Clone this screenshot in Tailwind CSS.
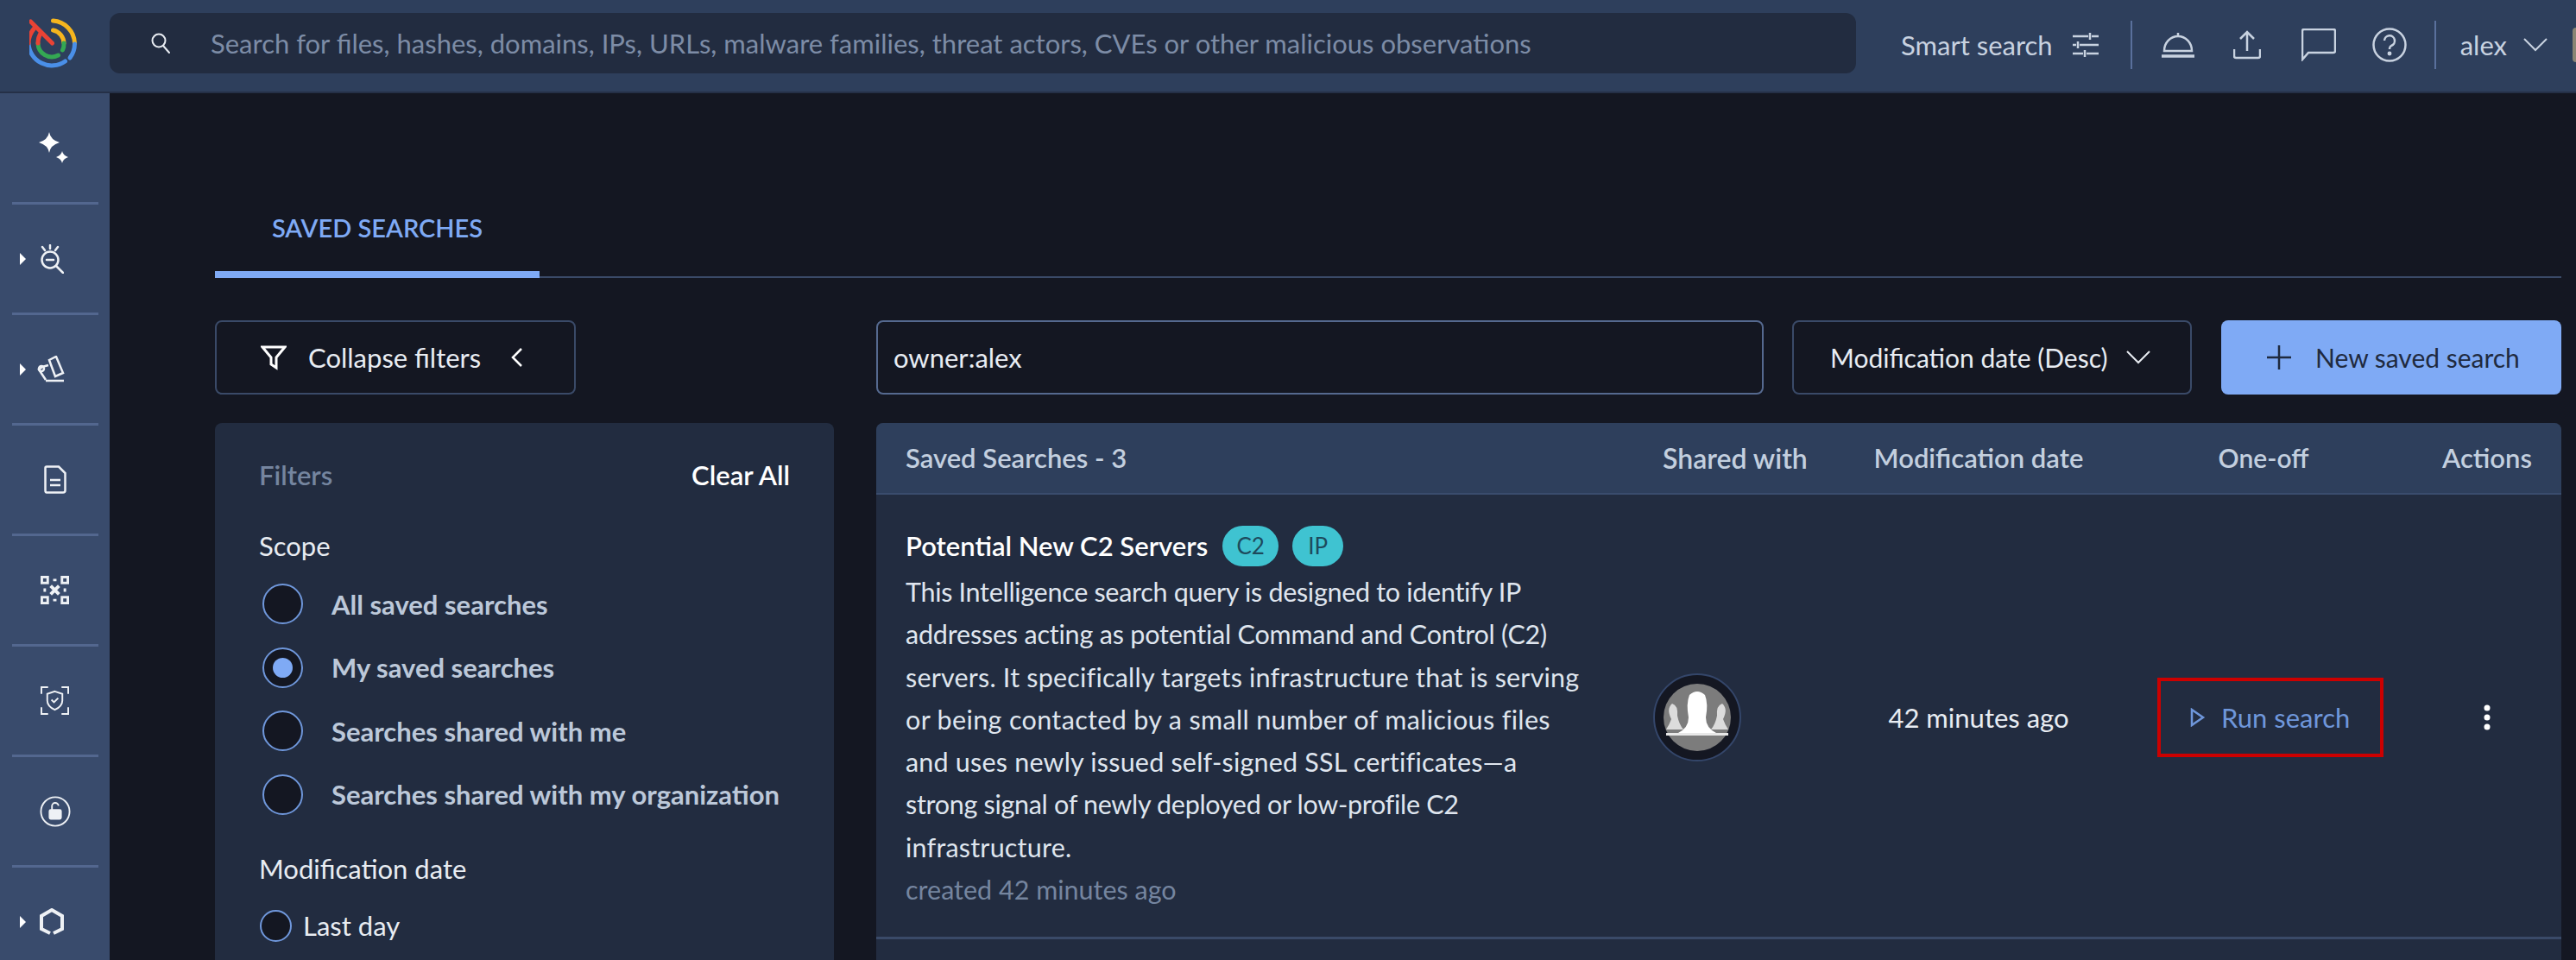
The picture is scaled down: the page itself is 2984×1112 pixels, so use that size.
<!DOCTYPE html>
<html lang="en">
<head>
<meta charset="utf-8">
<title>Saved searches</title>
<script src="https://cdn.jsdelivr.net/npm/@tailwindcss/browser@4"></script>
</head>
<body class="m-0">
<div class="w-[2984px] h-[1112px] flex flex-col overflow-hidden bg-[#141722] font-['Lato',sans-serif] text-[31px] text-[#e8ecf2]">
  <header class="h-[108px] flex-none flex bg-[#2e3f5c] border-b-2 border-[#253047]">
    <div class="w-[127px] flex-none flex justify-center pt-[21px]">
      <svg width="60" height="60" viewBox="33.5 21 60 60" fill="none" stroke-width="5" stroke-linecap="round">
        <path d="M61 24 A27 27 0 0 1 86 50" stroke="#f5b51e"/>
        <path d="M86 51 A27 27 0 0 1 80.5 67" stroke="#4a8fe8"/>
        <path d="M75 71 A27 27 0 0 1 32.5 50" stroke="#4a8fe8"/>
        <path d="M32.5 50 A27 27 0 0 1 39 33" stroke="#ea4335"/>
        <path d="M61 35 A15.5 15.5 0 0 1 73.5 50" stroke="#f5b51e"/>
        <path d="M73.5 50 A15 15 0 0 1 72 58" stroke="#34a853"/>
        <path d="M67 64 A16 16 0 0 1 43.5 50" stroke="#34a853"/>
        <path d="M43.5 50 Q43.5 43 47 38" stroke="#ea4335"/>
        <path d="M35 25 L60 50" stroke="#ea4335"/>
      </svg>
    </div>
    <div class="w-[2023px] h-[70px] mt-[15px] flex-none flex items-center rounded-[12px] bg-[#222c40]">
      <svg class="ml-[46px] flex-none" width="26" height="28" viewBox="0 0 26 28" fill="none" stroke="#e8ecf2" stroke-width="2"><circle cx="11" cy="11" r="7.5"/><path d="M16 17 L23 25" stroke-linecap="round"/></svg>
      <span class="ml-[45px] text-[#7d8ca6] whitespace-nowrap">Search for files, hashes, domains, IPs, URLs, malware families, threat actors, CVEs or other malicious observations</span>
    </div>
    <div class="flex-1 flex items-center pb-[2px] text-[#c8d2e0]">
      <span class="ml-[52px] whitespace-nowrap">Smart search</span>
      <svg class="ml-[23px] flex-none" width="30" height="30" viewBox="0 0 30 30" fill="none" stroke="#c8d2e0" stroke-width="2.5"><path d="M0 5H18M22 5H30M20 1V9M0 15H4M8 15H30M6 11V19M0 25H12M16 25H30M14 21V29"/></svg>
      <div class="ml-[37px] w-[2px] h-[56px] bg-[#5a709c]"></div>
      <svg class="ml-[33px] flex-none" width="40" height="30" viewBox="0 0 40 30" fill="none" stroke="#c8d2e0" stroke-width="2.5"><path d="M4 22 A16 17 0 0 1 36 22 Z"/><path d="M20 1V5"/><path d="M1 28H39" stroke-width="3.5"/></svg>
      <svg class="ml-[44px] flex-none" width="32" height="34" viewBox="0 0 32 34" fill="none" stroke="#c8d2e0" stroke-width="2.5"><path d="M16 24V3M8 10L16 2L24 10"/><path d="M1 22V30Q1 32 3 32H29Q31 32 31 30V22"/></svg>
      <svg class="ml-[47px] flex-none" width="40" height="38" viewBox="0 0 40 38" fill="none" stroke="#c8d2e0" stroke-width="2.5"><path d="M1 36V3Q1 1 3 1H37Q39 1 39 3V26Q39 28 37 28H8Z"/></svg>
      <svg class="ml-[42px] flex-none" width="40" height="40" viewBox="0 0 40 40" fill="none" stroke="#c8d2e0" stroke-width="2.5"><circle cx="20" cy="20" r="18.5"/><path d="M14 15A6 6 0 1 1 22 21Q20 22 20 25"/><circle cx="20" cy="30" r="1.2" fill="#c8d2e0"/></svg>
      <div class="ml-[32px] w-[2px] h-[56px] bg-[#5a709c]"></div>
      <span class="ml-[28px]">alex</span>
      <svg class="ml-[19px] flex-none" width="28" height="16" viewBox="0 0 28 16" fill="none" stroke="#c8d2e0" stroke-width="2"><path d="M1 1L14 14L27 1"/></svg>
      <div class="ml-[29px] w-[4px] h-[40px] rounded-l-full bg-[#8a8574]"></div>
    </div>
  </header>
  <div class="flex-1 flex min-h-0">
    <aside class="w-[127px] flex-none bg-[#394b6c] flex flex-col items-center">
      <div class="w-full h-[126px] flex-none flex items-center justify-center pr-[1px]">
        <svg width="36" height="38" viewBox="0 0 36 38" fill="#fff"><path d="M12 1Q13.5 10 24 13Q13.5 16 12 25Q10.5 16 0 13Q10.5 10 12 1Z"/><path d="M27 23Q28 28 34 30Q28 32 27 37Q26 32 20 30Q26 28 27 23Z"/></svg>
      </div>
      <div class="w-[100px] h-[3px] flex-none bg-[#53678f]"></div>
      <div class="w-full h-[125px] flex-none flex items-center pl-[23px]">
        <div class="w-0 h-0 border-y-[7px] border-y-transparent border-l-[7px] border-l-white"></div>
        <svg class="ml-[16px]" width="28" height="34" viewBox="0 0 28 34" fill="none" stroke="#eef1f5" stroke-width="2.5"><circle cx="12" cy="18" r="9.5"/><path d="M8 18H16M19 25L27 33M12 1V5M3 3L6 7M21 3L18 7" stroke-linecap="round"/></svg>
      </div>
      <div class="w-[100px] h-[3px] flex-none bg-[#53678f]"></div>
      <div class="w-full h-[125px] flex-none flex items-center pl-[23px]">
        <div class="w-0 h-0 border-y-[7px] border-y-transparent border-l-[7px] border-l-white"></div>
        <svg class="ml-[13px]" width="32" height="32" viewBox="0 0 32 32" fill="none" stroke="#eef1f5" stroke-width="2.5"><path d="M14 5L22 1L30 20L21 24Z"/><path d="M13 11L6 13L2 16L10 28"/><circle cx="5" cy="15" r="3"/><path d="M10 29H31"/></svg>
      </div>
      <div class="w-[100px] h-[3px] flex-none bg-[#53678f]"></div>
      <div class="w-full h-[125px] flex-none flex items-center justify-center">
        <svg width="26" height="33" viewBox="0 0 26 33" fill="none" stroke="#eef1f5" stroke-width="2.5"><path d="M3 1.5H17L24.5 9V29Q24.5 31.5 22 31.5H3Q1.5 31.5 1.5 29V3Q1.5 1.5 3 1.5Z"/><path d="M7 17H19M7 23H19"/></svg>
      </div>
      <div class="w-[100px] h-[3px] flex-none bg-[#53678f]"></div>
      <div class="w-full h-[125px] flex-none flex items-center justify-center">
        <svg width="33" height="33" viewBox="0 0 34 34" fill="none" stroke="#eef1f5" stroke-width="3"><rect x="1.5" y="1.5" width="7" height="7"/><rect x="25.5" y="1.5" width="7" height="7"/><rect x="1.5" y="25.5" width="7" height="7"/><rect x="25.5" y="25.5" width="7" height="7"/><path d="M12 12L22 22M22 12L12 22" stroke-width="4"/><path d="M15 5H19M15 29H19M5 15V19M29 15V19"/></svg>
      </div>
      <div class="w-[100px] h-[3px] flex-none bg-[#53678f]"></div>
      <div class="w-full h-[125px] flex-none flex items-center justify-center">
        <svg width="33" height="33" viewBox="0 0 34 34" fill="none" stroke="#eef1f5" stroke-width="2"><path d="M1 9V1H9M25 1H33V9M1 25V33H9M25 33H33V25"/><path d="M17 6L26 9V17Q26 24 17 28Q8 24 8 17V9Z"/><path d="M13 16L16 19L21 14"/></svg>
      </div>
      <div class="w-[100px] h-[3px] flex-none bg-[#53678f]"></div>
      <div class="w-full h-[125px] flex-none flex items-center justify-center">
        <svg width="36" height="36" viewBox="0 0 38 38" fill="none" stroke="#eef1f5" stroke-width="2"><circle cx="19" cy="19" r="17.5"/><rect x="12" y="17" width="14" height="11" rx="1.5" fill="#eef1f5"/><path d="M15 17V13A4 4 0 0 1 23 12"/></svg>
      </div>
      <div class="w-[100px] h-[3px] flex-none bg-[#53678f]"></div>
      <div class="w-full h-[125px] flex-none flex items-center pl-[23px]">
        <div class="w-0 h-0 border-y-[7px] border-y-transparent border-l-[7px] border-l-white"></div>
        <svg class="ml-[15px]" width="30" height="32" viewBox="0 0 30 32" fill="none" stroke="#eef1f5" stroke-width="4"><path d="M13 29L3 24V9L15 2L27 9V24L17 29"/></svg>
      </div>
    </aside>
    <main class="flex-1 min-w-0 pl-[122px] pr-[17px]">
      <div class="h-[214px] flex items-end border-b-2 border-[#3a4a68]">
        <div class="w-[376px] h-[85px] -mb-[2px] flex justify-center pt-[5px] border-b-[8px] border-[#7faaf5] text-[#7faaf5] text-[29px] font-semibold">SAVED SEARCHES</div>
      </div>
      <div class="mt-[49px] flex gap-[49px]">
        <div class="w-[717px] flex-none">
          <button class="w-[418px] h-[86px] flex items-center rounded-[8px] border-2 border-[#3a4a68] text-[#e8ecf2]">
            <svg class="ml-[51px]" width="30" height="30" viewBox="0 0 30 30" fill="none" stroke="#fff" stroke-width="3"><path d="M2 3H28L18 15V27L12 23V15Z"/></svg>
            <span class="ml-[25px]">Collapse filters</span>
            <svg class="ml-[35px]" width="14" height="24" viewBox="0 0 14 24" fill="none" stroke="#fff" stroke-width="2.5"><path d="M12 2L2 12L12 22"/></svg>
          </button>
          <section class="mt-[33px] h-[640px] rounded-t-[8px] bg-[#222c40] pl-[51px] pr-[51px]">
            <div class="flex justify-between pt-[43px] leading-[34px] font-semibold">
              <span class="text-[#75859f]">Filters</span><span class="text-white">Clear All</span>
            </div>
            <div class="mt-[48px] leading-[34px] text-[#e8ecf2]">Scope</div>
            <ul class="mt-[14px] font-bold text-[#bcc8d9]">
              <li class="h-[73.5px] flex items-center"><span class="ml-[4px] w-[47px] h-[47px] rounded-full border-2 border-[#6f97db] bg-[#141722]"></span><span class="ml-[33px] whitespace-nowrap">All saved searches</span></li>
              <li class="h-[73.5px] flex items-center"><span class="ml-[4px] w-[47px] h-[47px] rounded-full border-2 border-[#6f97db] bg-[#141722] flex items-center justify-center"><span class="w-[23px] h-[23px] rounded-full bg-[#7faaf5]"></span></span><span class="ml-[33px] whitespace-nowrap">My saved searches</span></li>
              <li class="h-[73.5px] flex items-center"><span class="ml-[4px] w-[47px] h-[47px] rounded-full border-2 border-[#6f97db] bg-[#141722]"></span><span class="ml-[33px] whitespace-nowrap">Searches shared with me</span></li>
              <li class="h-[73.5px] flex items-center"><span class="ml-[4px] w-[47px] h-[47px] rounded-full border-2 border-[#6f97db] bg-[#141722]"></span><span class="ml-[33px] whitespace-nowrap">Searches shared with my organization</span></li>
            </ul>
            <div class="mt-[32px] leading-[34px] text-[#e8ecf2]">Modification date</div>
            <div class="mt-[30px] h-[38px] flex items-center"><span class="ml-[1px] w-[37px] h-[37px] rounded-full border-2 border-[#6f97db] bg-[#141722]"></span><span class="ml-[13px]">Last day</span></div>
          </section>
        </div>
        <div class="flex-1 min-w-0">
          <div class="flex h-[86px]">
            <div class="w-[1028px] flex-none flex items-center pl-[18px] rounded-[8px] border-2 border-[#55698f]">owner:alex</div>
            <div class="ml-[33px] w-[463px] flex-none flex items-center pl-[42px] rounded-[8px] border-2 border-[#3a4a68] text-[30px]">
              <span class="whitespace-nowrap">Modification date (Desc)</span>
              <svg class="ml-[21px]" width="28" height="16" viewBox="0 0 28 16" fill="none" stroke="#e8ecf2" stroke-width="2"><path d="M1 1L14 14L27 1"/></svg>
            </div>
            <button class="ml-[34px] w-[394px] flex-none flex items-center pl-[52px] rounded-[8px] bg-[#7faaf5] text-[#1f2a3f] text-[30px]">
              <svg width="30" height="30" viewBox="0 0 30 30" fill="none" stroke="#1f2a3f" stroke-width="2.5"><path d="M15 1V29M1 15H29"/></svg>
              <span class="ml-[27px] whitespace-nowrap">New saved search</span>
            </button>
          </div>
          <div class="mt-[33px] h-[640px] rounded-t-[8px] bg-[#222c40] overflow-hidden">
            <div class="h-[83px] grid grid-cols-[896px_239px_284px_376px_142px] items-center bg-[#2e3f5c] border-b-2 border-[#3a4c6d] font-semibold text-[#c3cfdf]">
              <div class="pl-[34px]">Saved Searches - 3</div>
              <div class="pl-[15px] whitespace-nowrap text-[32px]">Shared with</div>
              <div class="text-center whitespace-nowrap">Modification date</div>
              <div class="text-center text-[30px]">One-off</div>
              <div class="text-center">Actions</div>
            </div>
            <div class="h-[515px] grid grid-cols-[896px_239px_284px_376px_142px] items-center border-b-[3px] border-[#3a4a68]">
              <div class="self-start pl-[34px] pt-[35px]">
                <div class="flex items-center h-[48px]">
                  <span class="font-semibold text-white whitespace-nowrap">Potential New C2 Servers</span>
                  <span class="ml-[17px] w-[65px] h-[47px] flex items-center justify-center rounded-full bg-[#3fc3d1] text-[#1d4a5c] text-[26px]">C2</span>
                  <span class="ml-[16px] w-[59px] h-[47px] flex items-center justify-center rounded-full bg-[#3fc3d1] text-[#1d4a5c] text-[26px]">IP</span>
                </div>
                <p class="mt-[5px] leading-[49.3px] whitespace-nowrap text-[30.5px] text-[#dfe5ee]">
                  <span class="block tracking-[-0.3px]">This Intelligence search query is designed to identify IP</span>
                  <span class="block tracking-[-0.2px]">addresses acting as potential Command and Control (C2)</span>
                  <span class="block tracking-[0.2px]">servers. It specifically targets infrastructure that is serving</span>
                  <span class="block tracking-[0.35px]">or being contacted by a small number of malicious files</span>
                  <span class="block tracking-[0.2px]">and uses newly issued self-signed SSL certificates—a</span>
                  <span class="block tracking-[-0.3px]">strong signal of newly deployed or low-profile C2</span>
                  <span class="block tracking-[0.2px]">infrastructure.</span>
                </p>
                <p class="leading-[49px] text-[#75859f] text-[30.5px]">created 42 minutes ago</p>
              </div>
              <div class="pl-[4px] pt-[4px]">
                <div class="w-[102px] h-[102px] rounded-full bg-[#141722] border-2 border-[#34466a] flex items-center justify-center">
                  <svg width="80" height="80" viewBox="0 0 80 80">
                    <circle cx="40" cy="40" r="39" fill="#7c7c7c"/>
                    <path d="M4 54 Q8 48 10 42 Q4 30 11 24 Q18 26 17 38 Q19 48 24 54Z" fill="#dcdcdc"/>
                    <path d="M76 54 Q72 48 70 42 Q76 30 69 24 Q62 26 63 38 Q61 48 56 54Z" fill="#dcdcdc"/>
                    <path d="M18 58 Q30 52 30 40 Q27 24 31 14 Q40 6 49 14 Q53 24 50 40 Q50 52 62 58Z" fill="#fff"/>
                    <path d="M4 58H76V61H4Z" fill="#e8e8e8"/>
                  </svg>
                </div>
              </div>
              <div class="text-center whitespace-nowrap pt-[4px]">42 minutes ago</div>
              <div class="flex justify-center pl-[16px] pt-[4px]">
                <div class="w-[262px] h-[92px] flex items-center pl-[34px] border-[4px] border-[#cc0000] text-[#6f97db]">
                  <svg width="18" height="22" viewBox="0 0 18 22" fill="none" stroke="#6f97db" stroke-width="2.5"><path d="M2 2L15 11L2 20Z"/></svg>
                  <span class="ml-[18px] whitespace-nowrap">Run search</span>
                </div>
              </div>
              <div class="flex justify-center pt-[4px]">
                <svg width="8" height="30" viewBox="0 0 8 30" fill="#fff"><circle cx="4" cy="4" r="3.5"/><circle cx="4" cy="15" r="3.5"/><circle cx="4" cy="26" r="3.5"/></svg>
              </div>
            </div>
          </div>
        </div>
      </div>
    </main>
  </div>
</div>
</body>
</html>
